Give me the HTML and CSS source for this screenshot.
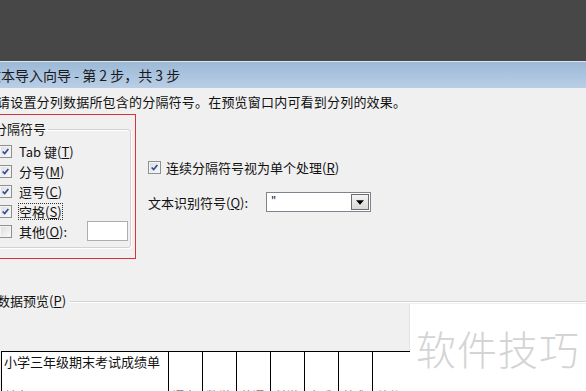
FILE: index.html
```html
<!DOCTYPE html>
<html lang="zh-CN">
<head>
  <meta charset="UTF-8" />
  <title>文本导入向导</title>
  <link rel="stylesheet" href="styles.css">
</head>
<body>

  <div class="topband"></div>

  <div class="titlebar">
    <span class="title">文本导入向导 - 第 2 步，共 3 步</span>
  </div>

  <div class="wizard">
    <p class="hint">请设置分列数据所包含的分隔符号。在预览窗口内可看到分列的效果。</p>

    <div class="options">
      <!-- 红框标注 -->
      <div class="highlight">
        <fieldset class="group">
          <legend>分隔符号</legend>
          <div class="row"><span class="box on"><svg viewBox="0 0 11 11"><path d="M2 5.5 L4.5 8 L9 2.5" /></svg></span><span class="lbl">Tab 键(<u>T</u>)</span></div>
          <div class="row"><span class="box on"><svg viewBox="0 0 11 11"><path d="M2 5.5 L4.5 8 L9 2.5" /></svg></span><span class="lbl">分号(<u>M</u>)</span></div>
          <div class="row"><span class="box on"><svg viewBox="0 0 11 11"><path d="M2 5.5 L4.5 8 L9 2.5" /></svg></span><span class="lbl">逗号(<u>C</u>)</span></div>
          <div class="row"><span class="box on"><svg viewBox="0 0 11 11"><path d="M2 5.5 L4.5 8 L9 2.5" /></svg></span><span class="lbl focus">空格(<u>S</u>)</span></div>
          <div class="row"><span class="box"></span><span class="lbl">其他(<u>O</u>):</span><span class="textbox"></span></div>
        </fieldset>
      </div>

      <div class="side">
        <div class="row"><span class="box on"><svg viewBox="0 0 11 11"><path d="M2 5.5 L4.5 8 L9 2.5" /></svg></span><span class="lbl">连续分隔符号视为单个处理(<u>R</u>)</span></div>
        <div class="row qualifier">
          <span class="qlabel">文本识别符号(<u>Q</u>):</span>
          <div class="combo">
            <span class="combo-value">"</span>
            <span class="combo-btn"><svg viewBox="0 0 9 5"><path d="M0 0 H9 L4.5 5 Z" /></svg></span>
          </div>
        </div>
      </div>
    </div>

    <div class="preview">
      <div class="preview-head">
        <span>数据预览(<u>P</u>)</span>
        <i class="rule"></i>
      </div>
      <div class="preview-body">
        <div class="sheet-area">
          <table class="sheet">
            <tr class="r1">
              <td class="c1">小学三年级期末考试成绩单</td>
              <td></td><td></td><td></td><td></td><td></td><td></td><td class="last"></td>
            </tr>
            <tr class="r2">
              <td class="c1">姓名</td>
              <td>语文</td><td>数学</td><td>英语</td><td>科学</td><td>音乐</td><td>美术</td><td class="last">总分</td>
            </tr>
          </table>
        </div>
        <div class="watermark">软件技巧</div>
      </div>
    </div>
  </div>

</body>
</html>
```

FILE: styles.css
```css
* { margin: 0; padding: 0; box-sizing: border-box; }

body {
  width: 586px;
  height: 391px;
  overflow: hidden;
  background: #f0f0f0;
  color: #111;
  font-family: "Noto Sans CJK SC", "Noto Sans", sans-serif;
  font-size: 13px;
}

u { text-decoration: underline; text-underline-offset: 1px; }

.topband {
  height: 61px;
  background: #474747;
}

.titlebar {
  height: 27px;
  border-top: 1px solid #dde4ec;
  background: linear-gradient(to bottom, #9cb9d7, #b9cee6);
  display: flex;
  align-items: center;
  overflow: hidden;
  white-space: nowrap;
}
.title {
  margin-left: -13px;
  font-size: 14px;
  line-height: 16px;
  color: #1a1a1a;
}

.wizard { overflow: hidden; }

.hint {
  margin: 6px 0 0 -3px;
  line-height: 16px;
  letter-spacing: 0.2px;
  white-space: nowrap;
}

.options {
  display: flex;
  margin-top: 4px;
}

.highlight {
  margin-left: -10px;
  width: 146px;
  height: 145px;
  border: 1px solid #d8323a;
  padding: 7px 4px 0 0;
}

.group {
  border: 1px solid #d2d2d2;
  border-radius: 3px;
  box-shadow: inset 1px 1px 0 #fff, 1px 1px 0 #fff;
  padding: 5px 0 6px 8px;
  height: 126px;
}
.group legend {
  margin-left: -6px;
  line-height: 14px;
  padding: 0 2px 0 0;
}

.row {
  display: flex;
  align-items: center;
  height: 20px;
  white-space: nowrap;
}

.box {
  width: 13px;
  height: 13px;
  flex: none;
  border: 1px solid #8e8f8f;
  background: linear-gradient(135deg, #dcdcdc, #fbfbfb);
  box-shadow: inset 0 0 0 1px #f4f4f4;
  display: flex;
  align-items: center;
  justify-content: center;
  margin-left: -1px;
}
.box svg { width: 9px; height: 9px; }
.box path {
  fill: none;
  stroke: #2c4a9a;
  stroke-width: 2;
}

.lbl {
  margin-left: 7px;
  line-height: 15px;
}
.focus {
  outline: 1px dotted #333;
  outline-offset: 0;
}

.textbox {
  width: 41px;
  height: 20px;
  margin-left: 20px;
  background: #fff;
  border: 1px solid #abadb3;
}

.side {
  margin-left: 12px;
  padding-top: 43px;
}
.side .box { margin-left: 0; }
.side .lbl { margin-left: 5px; }

.qualifier { margin-top: 15px; }
.qlabel { width: 118px; }

.combo {
  width: 105px;
  height: 20px;
  border: 1px solid #7e848d;
  background: #fff;
  display: flex;
  align-items: center;
  justify-content: space-between;
  padding: 0 1px 0 4px;
}
.combo-value { font-size: 11px; line-height: 14px; align-self: flex-start; padding-top: 1px; }
.combo-btn {
  width: 18px;
  height: 16px;
  border: 1px solid #6d6d6d;
  background: linear-gradient(to bottom, #f4f4f4, #d8d8d8);
  display: flex;
  align-items: center;
  justify-content: center;
}
.combo-btn svg { width: 8px; height: 5px; fill: #000; }

.preview { margin-top: 36px; }

.preview-head {
  display: flex;
  align-items: center;
  height: 12px;
  line-height: 12px;
  margin-left: -3px;
  margin-bottom: -3px;
}
.rule {
  flex: 1;
  margin-left: 4px;
  margin-top: 2px;
  border-top: 1px solid #d5d5d5;
  border-bottom: 1px solid #fff;
}

.preview-body {
  display: flex;
  height: 88px;
}

.sheet-area {
  width: 410px;
  padding-top: 47px;
  border-right: 1px solid #e4e4e4;
}

.sheet {
  margin-left: 1px;
  width: 409px;
  border-collapse: collapse;
  background: #fff;
  table-layout: fixed;
}
.sheet td {
  width: 34px;
  border-top: 1px solid #000;
  border-left: 1px solid #000;
  vertical-align: top;
  white-space: nowrap;
  overflow: hidden;
  font-size: 13px;
  line-height: 16px;
}
.sheet td.c1 { width: 167px; padding-left: 2px; }
.sheet td.last { width: 37px; }
.sheet .r1 td { height: 36px; padding-top: 2px; }
.sheet .r2 td { border-top: none; color: #777; font-size: 12px; padding-left: 3px; }

.watermark {
  flex: 1;
  background: #fff;
  display: flex;
  align-items: center;
  justify-content: center;
  color: #d4d4d4;
  font-size: 40px;
  font-weight: 300;
  letter-spacing: 1px;
}
```
